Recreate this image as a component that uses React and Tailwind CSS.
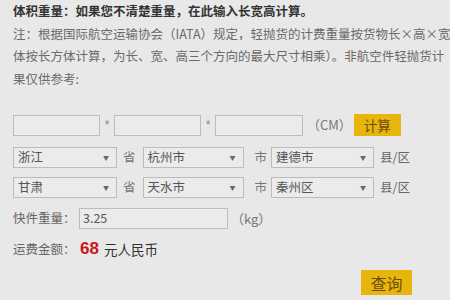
const FONT = "font-['Noto_Sans_CJK_SC','Noto_Sans',sans-serif]"

function Box({ w, children, arrow }) {
  return (
    <div
      className="flex h-[21px] items-center justify-between border border-[#bcbcbc] bg-[#ebebeb] pl-[4px] pr-[7px] text-[12.5px] text-[#555]"
      style={{ width: w }}
    >
      <span className="leading-none">{children}</span>
      {arrow && <span className="text-[6px] leading-none text-[#666]">▼</span>}
    </div>
  )
}

function SelectRow({ a, b, c }) {
  return (
    <div className="flex items-center">
      <Box w={104} arrow>{a}</Box>
      <span className="ml-[6px] mr-[7px] text-[12.5px] text-[#777]">省</span>
      <Box w={101} arrow>{b}</Box>
      <span className="ml-[11px] mr-[4px] text-[12.5px] text-[#777]">市</span>
      <Box w={103} arrow>{c}</Box>
      <span className="ml-[6px] text-[12.5px] text-[#666]">县/区</span>
    </div>
  )
}

export default function App() {
  return (
    <div className={`h-[300px] w-[450px] overflow-hidden bg-[#e8e8e8] pl-[13px] ${FONT}`}>
      {/* notes */}
      <div className="whitespace-nowrap text-[12.5px] leading-[22.5px] text-[#6a6a6a]">
        <div className="font-bold text-[#333]">体积重量：如果您不清楚重量，在此输入长宽高计算。</div>
        <div>注：根据国际航空运输协会（IATA）规定，轻抛货的计费重量按货物长×高×宽</div>
        <div>体按长方体计算，为长、宽、高三个方向的最大尺寸相乘）。非航空件轻抛货计</div>
        <div>果仅供参考:</div>
      </div>

      {/* size row */}
      <div className="mt-[24px] flex items-center">
        <Box w={87} />
        <span className="w-[14px] text-center font-['Liberation_Sans',sans-serif] text-[12px] text-[#888]">*</span>
        <Box w={87} />
        <span className="w-[14px] text-center font-['Liberation_Sans',sans-serif] text-[12px] text-[#888]">*</span>
        <Box w={88} />
        <span className="ml-[4px] text-[13px] text-[#777]">（CM）</span>
        <button className="ml-[2px] flex h-[22px] w-[47px] items-center justify-center bg-[#e8b50c] text-[13.5px] text-[#6b4f12]">
          计算
        </button>
      </div>

      <div className="mt-[11px]">
        <SelectRow a="浙江" b="杭州市" c="建德市" />
      </div>
      <div className="mt-[9px]">
        <SelectRow a="甘肃" b="天水市" c="秦州区" />
      </div>

      {/* weight */}
      <div className="mt-[10px] flex items-center">
        <span className="w-[66px] text-[12.5px] text-[#666]">快件重量：</span>
        <div className="flex h-[21px] w-[149px] items-center border border-[#bcbcbc] bg-[#ebebeb] pl-[3px] text-[12.5px] text-[#555]">
          3.25
        </div>
        <span className="ml-[3px] text-[13px] text-[#777]">（kg）</span>
      </div>

      {/* result */}
      <div className="mt-[10px] flex h-[20px] items-center">
        <span className="w-[67px] text-[12.5px] text-[#666]">运费金额：</span>
        <span className="font-['Liberation_Sans',sans-serif] text-[17px] font-bold text-[#c7161c]">68</span>
        <span className="ml-[5px] text-[13.5px] text-[#333]">元人民币</span>
      </div>

      <div className="mt-[11px] flex justify-end pr-[38px]">
        <button className="flex h-[25px] w-[51px] items-center justify-center bg-[#e8b50c] text-[16px] text-[#6b4f12]">
          查询
        </button>
      </div>
    </div>
  )
}
